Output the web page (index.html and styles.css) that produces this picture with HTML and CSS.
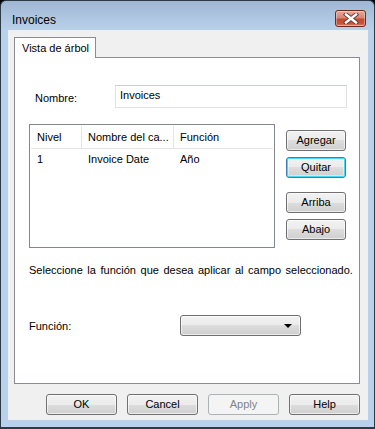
FILE: index.html
```html
<!DOCTYPE html>
<html>
<head>
<meta charset="utf-8">
<link rel="stylesheet" href="styles.css">
</head>
<body>
<div class="window">
  <div class="titlebar">
    <span class="title">Invoices</span>
    <div class="close">
      <svg width="16" height="11" viewBox="0 0 16 11">
        <path d="M3 1.5 L13 9.5 M13 1.5 L3 9.5" stroke="#5a3a36" stroke-width="4.2" stroke-linecap="square" fill="none"/>
        <path d="M3 1.5 L13 9.5 M13 1.5 L3 9.5" stroke="#ffffff" stroke-width="2.4" stroke-linecap="square" fill="none"/>
      </svg>
    </div>
  </div>
  <div class="client">
    <div class="tabs">
      <div class="tab">Vista de árbol</div>
    </div>
    <div class="panel">
      <div class="row-name">
        <span class="lbl-name">Nombre:</span>
        <div class="textbox">Invoices</div>
      </div>
      <div class="row-list">
        <div class="listview">
          <div class="lv-head">
            <div class="c1">Nivel</div>
            <div class="c2">Nombre del ca...</div>
            <div class="c3">Función</div>
          </div>
          <div class="lv-row">
            <div class="c1">1</div>
            <div class="c2">Invoice Date</div>
            <div class="c3">Año</div>
          </div>
        </div>
        <div class="sidebtns">
          <div class="btn">Agregar</div>
          <div class="btn focus">Quitar</div>
          <div class="btn gap">Arriba</div>
          <div class="btn">Abajo</div>
        </div>
      </div>
      <div class="desc">Seleccione la función que desea aplicar al campo seleccionado.</div>
      <div class="row-func">
        <span class="lbl-func">Función:</span>
        <div class="combo"><span class="arrow"></span></div>
      </div>
    </div>
    <div class="footer">
      <div class="btn wide">OK</div>
      <div class="btn wide">Cancel</div>
      <div class="btn wide disabled">Apply</div>
      <div class="btn wide">Help</div>
    </div>
  </div>
</div>
</body>
</html>
```
FILE: styles.css
```css
html, body {
  margin: 0;
  padding: 0;
  background: #000;
}
body {
  font-family: "Liberation Sans", Arial, sans-serif;
  font-size: 11px;
  color: #000;
}
.window {
  box-sizing: border-box;
  width: 375px;
  height: 429px;
  border: 1px solid #2e3a48;
  border-bottom-width: 2px;
  border-radius: 6px 6px 0 0;
  background: linear-gradient(#9fb7d3 0px, #b2c9e3 20px, #b9d1ea 30px, #b9d1ea 100%);
  padding: 0 6px 7px 7px;
  display: flex;
  flex-direction: column;
}
.titlebar {
  height: 29px;
  display: flex;
  align-items: flex-start;
  justify-content: space-between;
}
.title {
  font-size: 12px;
  margin: 12px 0 0 4px;
  color: #000;
}
.close {
  box-sizing: border-box;
  width: 31px;
  height: 17px;
  margin: 9px 2px 0 0;
  border: 1px solid #6b2b24;
  border-radius: 3px;
  background: linear-gradient(#e6a99b 0%, #d98571 45%, #c24a31 55%, #c9553a 85%, #e08a6a 100%);
  display: flex;
  align-items: center;
  justify-content: center;
  box-shadow: inset 0 0 0 1px rgba(255,255,255,0.35);
}
.close svg { display: block; }
.client {
  flex: 1;
  background: #f0f0f0;
  padding: 7px 8px 0 6px;
  display: flex;
  flex-direction: column;
}
.tabs {
  display: flex;
  height: 20px;
  position: relative;
  z-index: 1;
}
.tab {
  box-sizing: border-box;
  width: 82px;
  height: 21px;
  background: #fff;
  border: 1px solid #898c95;
  border-bottom: none;
  padding: 4px 0 0 7px;
  font-size: 11px;
}
.panel {
  box-sizing: border-box;
  height: 327px;
  background: #fff;
  border: 1px solid #898c95;
  display: flex;
  flex-direction: column;
  padding: 0 10px 0 14px;
}
.row-name {
  display: flex;
  align-items: center;
  margin-top: 27px;
}
.lbl-name {
  width: 86px;
  padding-left: 6px;
  box-sizing: border-box;
  margin-top: 3px;
}
.textbox {
  box-sizing: border-box;
  width: 232px;
  height: 23px;
  border: 1px solid #dfe3e8;
  border-top-color: #c9ced6;
  padding: 3px 0 0 4px;
}
.row-list {
  display: flex;
  margin-top: 16px;
}
.listview {
  box-sizing: border-box;
  width: 246px;
  height: 124px;
  border: 1px solid #828790;
  padding: 1px;
}
.lv-head, .lv-row {
  display: flex;
}
.lv-head {
  height: 22px;
  border-bottom: 1px solid #e5e5e5;
  align-items: center;
}
.lv-head > div {
  box-sizing: border-box;
  height: 22px;
  padding: 5px 0 0 6px;
  border-right: 1px solid #e5e5e5;
}
.lv-row > div {
  box-sizing: border-box;
  padding: 4px 0 0 6px;
  height: 18px;
}
.c1 { width: 51px; }
.c2 { width: 92px; }
.c3 { width: 80px; }
.lv-head .c3 { border-right: none; }
.sidebtns {
  margin: 6px 0 0 11px;
  display: flex;
  flex-direction: column;
  gap: 6px;
}
.btn {
  box-sizing: border-box;
  width: 60px;
  height: 21px;
  border: 1px solid #707070;
  border-radius: 3px;
  background: linear-gradient(#f2f2f2 0%, #ebebeb 50%, #dddddd 50%, #cfcfcf 100%);
  box-shadow: inset 0 0 0 1px rgba(255,255,255,0.6);
  display: flex;
  align-items: center;
  justify-content: center;
  font-size: 11px;
  line-height: 1;
  color: #000;
}
.btn.focus {
  border-color: #3c7fb1;
  box-shadow: inset 0 0 0 1px #48d8fb, inset 0 0 0 2px rgba(255,255,255,0.4);
}
.sidebtns .btn.gap { margin-top: 8px; }
.desc {
  margin: 16px 0 0 0;
  white-space: nowrap;
  word-spacing: 1.5px;
}
.row-func {
  display: flex;
  align-items: center;
  margin-top: 39px;
}
.lbl-func {
  width: 151px;
}
.combo {
  box-sizing: border-box;
  width: 121px;
  height: 21px;
  border: 1px solid #707070;
  border-radius: 3px;
  background: linear-gradient(#f2f2f2 0%, #ebebeb 50%, #dddddd 50%, #cfcfcf 100%);
  box-shadow: inset 0 0 0 1px rgba(255,255,255,0.6);
  position: relative;
}
.arrow {
  position: absolute;
  right: 8px;
  top: 8px;
  width: 0;
  height: 0;
  border-left: 4px solid transparent;
  border-right: 4px solid transparent;
  border-top: 4px solid #000;
}
.footer {
  display: flex;
  justify-content: flex-end;
  gap: 10px;
  margin-top: 10px;
}
.btn.wide {
  width: 71px;
}
.btn.disabled {
  border-color: #adb2b5;
  background: #f4f4f4;
  color: #838383;
  box-shadow: none;
}
```
